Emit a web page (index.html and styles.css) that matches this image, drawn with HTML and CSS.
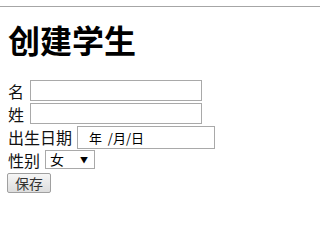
FILE: index.html
```html
<!DOCTYPE html>
<html lang="zh">
<head>
<meta charset="utf-8">
<title>创建学生</title>
<link rel="stylesheet" href="styles.css">
</head>
<body>
<hr class="rule">
<main class="page">
  <h1 class="title">创建学生</h1>
  <form class="form">
    <div class="row row-name">
      <label class="label" for="first">名</label>
      <input class="field field-text" id="first" type="text">
    </div>
    <div class="row row-name">
      <label class="label" for="last">姓</label>
      <input class="field field-text" id="last" type="text">
    </div>
    <div class="row row-date">
      <label class="label" for="dob">出生日期</label>
      <div class="field field-date" id="dob">年&nbsp; /月/日</div>
    </div>
    <div class="row row-sex">
      <label class="label" for="sex">性别</label>
      <div class="field field-select" id="sex"><span>女</span><span class="arrow">▼</span></div>
    </div>
    <div class="row row-btn">
      <button class="btn" type="button">保存</button>
    </div>
  </form>
</main>
</body>
</html>
```
FILE: styles.css
```css
html, body {
  margin: 0;
  padding: 0;
  background: #fff;
}
body {
  font-family: "Noto Sans CJK SC", "Liberation Sans", sans-serif;
  color: #000;
}
.rule {
  border: 0;
  border-top: 1px solid #a6a6a6;
  margin: 6px 0 0;
  height: 0;
}
.page {
  padding: 0 8px;
}
.title {
  font-size: 32px;
  font-weight: bold;
  line-height: 36px;
  margin: 14px 0 0;
  height: 36px;
}
.form {
  margin-top: 22px;
}
.row {
  display: flex;
  align-items: center;
  gap: 5px;
}
.row-name { height: 23px; }
.row-date { height: 24px; }
.row-sex { height: 21px; }
.row-btn { height: 20px; margin-top: 3px; }
.label {
  font-size: 16px;
  line-height: 18px;
  color: #111;
}
.row-name .label { width: 17px; }
.field {
  box-sizing: border-box;
  border: 1px solid #a9a9a9;
  background: #fff;
  font-family: "Noto Sans CJK SC", "Liberation Sans", sans-serif;
  margin: 0;
  padding: 0;
}
.field-text {
  width: 172px;
  height: 21px;
}
.field-date {
  width: 138px;
  height: 23px;
  font-size: 13px;
  line-height: 21px;
  padding-left: 11px;
  color: #000;
}
.field-select {
  width: 50px;
  height: 19px;
  font-size: 14px;
  line-height: 17px;
  padding-left: 4px;
  display: flex;
  justify-content: space-between;
  align-items: center;
  padding-right: 6px;
}
.arrow {
  font-size: 8px;
}
.btn {
  box-sizing: border-box;
  width: 44px;
  height: 20px;
  margin-left: -1px;
  padding: 0;
  font-family: "Noto Sans CJK SC", "Liberation Sans", sans-serif;
  font-size: 14px;
  line-height: 18px;
  color: #333;
  background: linear-gradient(#f6f6f6, #dddddd);
  border: 1px solid #a0a0a0;
  border-radius: 2px;
}
```
